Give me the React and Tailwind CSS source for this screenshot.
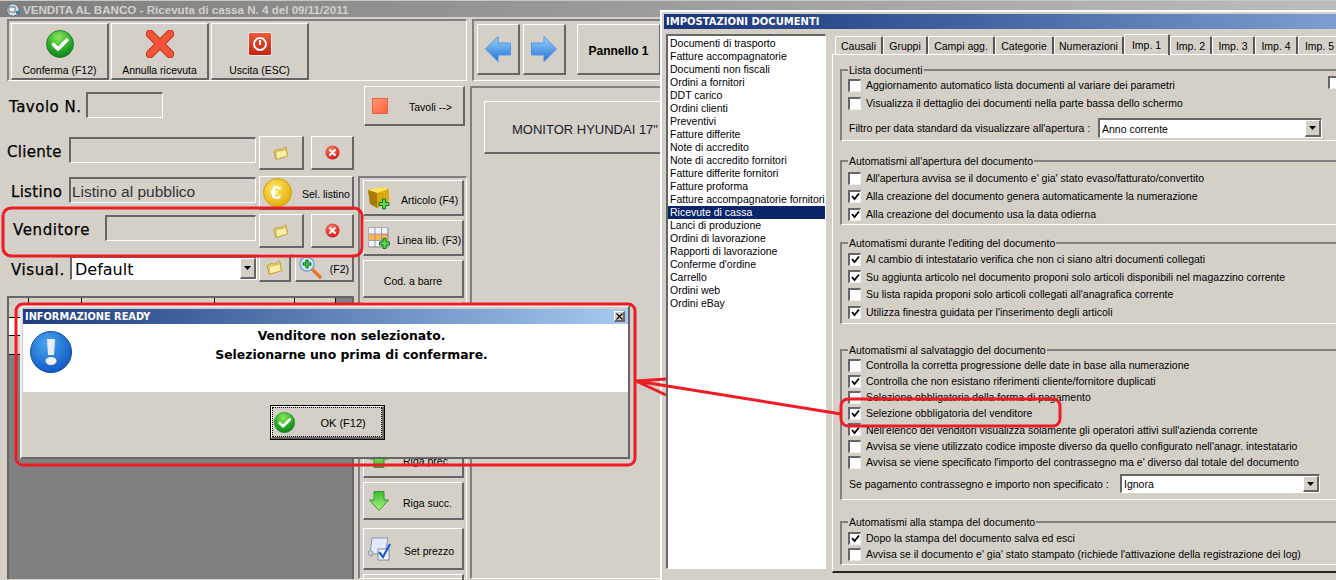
import React from "react"

const raised = "border-t border-l border-r-2 border-b-2 border-t-white border-l-white border-r-[#666] border-b-[#666]"
const sunken = "border-t-2 border-l-2 border-r border-b border-t-[#666] border-l-[#666] border-r-white border-b-white"
const etched = "border-t-2 border-l-2 border-r border-b border-t-[#808080] border-l-[#808080] border-r-white border-b-white"
const formLabel = "font-['DejaVu_Sans'] text-[15px] whitespace-nowrap [-webkit-text-stroke:0.25px_black]"

function GreenCheck({ size = 28, id = "gc" }) {
  return (
    <svg width={size} height={size} viewBox="0 0 28 28">
      <defs>
        <radialGradient id={id} cx="45%" cy="25%" r="80%">
          <stop offset="0%" stopColor="#8ee85a" />
          <stop offset="55%" stopColor="#2fae2a" />
          <stop offset="100%" stopColor="#0a7a18" />
        </radialGradient>
      </defs>
      <circle cx="14" cy="14" r="13.5" fill={`url(#${id})`} stroke="#0d7f1d" strokeWidth="0.8" />
      <path d="M7.5 14.5 L12 19 L21 10" fill="none" stroke="#fff" strokeWidth="3.6" strokeLinecap="round" strokeLinejoin="round" />
    </svg>
  )
}

function RedCross() {
  return (
    <svg width="30" height="28" viewBox="0 0 30 28">
      <path d="M5 4 L25 24 M25 4 L5 24" stroke="#c8321a" strokeWidth="8.5" strokeLinecap="round" />
      <path d="M5 4 L25 24 M25 4 L5 24" stroke="#f4553a" strokeWidth="6.4" strokeLinecap="round" />
    </svg>
  )
}

function PowerIcon() {
  return (
    <svg width="24" height="24" viewBox="0 0 24 24">
      <defs>
        <linearGradient id="pw" x1="0" y1="0" x2="0" y2="1">
          <stop offset="0%" stopColor="#f0583c" />
          <stop offset="100%" stopColor="#c8200c" />
        </linearGradient>
      </defs>
      <rect x="0.5" y="0.5" width="23" height="23" rx="2" fill="url(#pw)" stroke="#f3efe8" />
      <circle cx="12" cy="12" r="6" fill="none" stroke="#fff" strokeWidth="2" />
      <path d="M12 8 V13" stroke="#fff" strokeWidth="2" />
    </svg>
  )
}

function Folder({ size = 16 }) {
  return (
    <svg width={size} height={size} viewBox="0 0 16 16">
      <path d="M1 6 L6 4 L7 5 L13 2 L14.5 11 L3 14.5 Z" fill="#f4dc78" stroke="#b8962e" strokeWidth="0.9" strokeLinejoin="round" />
      <path d="M3 7 L13 4.5 L14.5 11 L3.2 14.2 Z" fill="#fbeea6" stroke="#c4a238" strokeWidth="0.7" strokeLinejoin="round" />
    </svg>
  )
}

function RedCircleX({ id }) {
  return (
    <svg width="15" height="15" viewBox="0 0 15 15">
      <defs>
        <radialGradient id={id} cx="40%" cy="30%" r="80%">
          <stop offset="0%" stopColor="#ff7a66" />
          <stop offset="100%" stopColor="#d01010" />
        </radialGradient>
      </defs>
      <circle cx="7.5" cy="7.5" r="7" fill={`url(#${id})`} />
      <path d="M5 5 L10 10 M10 5 L5 10" stroke="#fff" strokeWidth="2" strokeLinecap="round" />
    </svg>
  )
}

function EuroCoin() {
  return (
    <svg width="29" height="29" viewBox="0 0 29 29" className="shrink-0">
      <defs>
        <radialGradient id="eu" cx="40%" cy="35%" r="75%">
          <stop offset="0%" stopColor="#ffe768" />
          <stop offset="100%" stopColor="#e0a800" />
        </radialGradient>
      </defs>
      <circle cx="14.5" cy="14.5" r="14" fill="url(#eu)" stroke="#d19c00" />
      <text x="13" y="21" textAnchor="middle" fontSize="19" fontWeight="700" fill="#fff" fontFamily="Liberation Sans, sans-serif">€</text>
    </svg>
  )
}

function PlusBadge({ x, y }) {
  return (
    <path
      transform={`translate(${x} ${y})`}
      d="M3.5 0 H6.5 V3.5 H10 V6.5 H6.5 V10 H3.5 V6.5 H0 V3.5 H3.5 Z"
      fill="#5fd94a"
      stroke="#0c7a1a"
      strokeWidth="1"
    />
  )
}

function Cube() {
  return (
    <svg width="24" height="24" viewBox="0 0 24 24">
      <path d="M1 4 L14 1 L22 3 L22 15 L11 22 L3 18 Z" fill="#d8aa10" />
      <path d="M1 4 L10 7 L22 3 L14 1 Z" fill="#ffe55a" />
      <path d="M1 4 L10 7 L10 22 L3 18 Z" fill="#a87c06" />
      <PlusBadge x="12" y="13" />
    </svg>
  )
}

function GridPlus() {
  const cells = []
  for (let r = 0; r < 3; r++) {
    for (let c = 0; c < 3; c++) {
      const fill = r === 1 ? "#f7b55a" : "#f2f2fa"
      cells.push(<rect key={`${r}${c}`} x={1 + c * 6.4} y={1 + r * 6.4} width="5.6" height="5.6" fill={fill} />)
    }
  }
  return (
    <svg width="22" height="22" viewBox="0 0 22 22">
      <rect x="0.5" y="0.5" width="20" height="20" fill="#8a8a9a" />
      {cells}
      <PlusBadge x="11.5" y="11.5" />
    </svg>
  )
}

function Magnifier() {
  return (
    <svg width="23" height="23" viewBox="0 0 23 23">
      <path d="M13 13 L21 21" stroke="#e8792a" strokeWidth="3.5" strokeLinecap="round" />
      <circle cx="8" cy="8" r="7" fill="#cfe8fa" stroke="#6fa4c8" strokeWidth="1.4" />
      <path d="M6.8 4 H9.2 V6.8 H12 V9.2 H9.2 V12 H6.8 V9.2 H4 V6.8 H6.8 Z" fill="#35c23a" stroke="#0c6a1a" strokeWidth="0.8" />
    </svg>
  )
}

function BlueArrow({ flip, id }) {
  return (
    <svg width="26" height="26" viewBox="0 0 26 26" className={flip ? "-scale-x-100" : ""}>
      <defs>
        <linearGradient id={id} x1="0" y1="0" x2="0" y2="1">
          <stop offset="0%" stopColor="#9fd2fa" />
          <stop offset="100%" stopColor="#1f74d8" />
        </linearGradient>
      </defs>
      <path d="M0.5 13 L13 0.5 V7 H25.5 V19 H13 V25.5 Z" fill={`url(#${id})`} stroke="#4b95e6" strokeLinejoin="round" />
    </svg>
  )
}

function GreenArrow({ id, up }) {
  return (
    <svg width="20" height="20" viewBox="0 0 20 20" className={up ? "-scale-y-100" : ""}>
      <defs>
        <linearGradient id={id} x1="0" y1="0" x2="0" y2="1">
          <stop offset="0%" stopColor="#3dbb2c" />
          <stop offset="100%" stopColor="#b0f585" />
        </linearGradient>
      </defs>
      <path d="M5 0.5 H15 V9 H19.5 L10 19.5 L0.5 9 H5 Z" fill={`url(#${id})`} stroke="#2f9a25" strokeLinejoin="round" />
    </svg>
  )
}

function DocCheck() {
  return (
    <svg width="24" height="24" viewBox="0 0 24 24">
      <path d="M5 1 H21 L18 17 H3 Z" fill="#e4eaf8" stroke="#8a94b4" />
      <path d="M1 15 Q3 12 6 15 L5 19 Q2 20 1 15 Z" fill="#c8d0e4" stroke="#8a94b4" />
      <rect x="11" y="12" width="11" height="11" fill="#f8f8fc" stroke="#7a86a8" />
      <path d="M12 15 L16 20 L23 7" fill="none" stroke="#1c5cc8" strokeWidth="2.2" />
    </svg>
  )
}

function AppIcon() {
  return (
    <svg width="15" height="15" viewBox="0 0 15 15">
      <circle cx="7" cy="8" r="6" fill="#d8dce0" stroke="#4a5a6a" strokeDasharray="2 1" />
      <rect x="3" y="5" width="6" height="5" fill="#f4f4f4" stroke="#39566f" strokeWidth="0.8" />
      <rect x="10" y="9" width="4" height="3" fill="#2f7fb8" />
    </svg>
  )
}

function SideButton({ className, icon, label, labelClass }) {
  return (
    <div className={`${raised} ${className} flex shrink-0 items-center`}>
      <span className="ml-[3px] flex w-[24px] shrink-0 justify-center">{icon}</span>
      <span className={`whitespace-nowrap ${labelClass}`}>{label}</span>
    </div>
  )
}

function ToolButton({ icon, label }) {
  return (
    <div className={`${raised} flex h-[57px] w-[98px] flex-col items-center justify-end`}>
      <span className="flex h-[30px] items-center">{icon}</span>
      <span className="mt-[3px] leading-[16px]">{label}</span>
    </div>
  )
}

function FormRow({ className, children }) {
  return <div className={`flex items-center ${className}`}>{children}</div>
}

function SalesWindow() {
  return (
    <div className="w-[700px]">
      <div className="flex h-[17px] w-[1336px] items-center gap-[2px] border-t border-t-[#c8c8c8] bg-gradient-to-r from-[#7f7f7f] to-[#bcbcbc] pl-[6px]">
        <AppIcon />
        <span className="pt-[2px] text-[11.6px] font-bold text-[#d4d0c8]">VENDITA AL BANCO - Ricevuta di cassa N. 4 del 09/11/2011</span>
      </div>

      <div className="mt-[2px] flex pl-[7px]">
        <div className={`${etched} flex h-[62px] w-[460px] gap-[2px] pl-[2px] pt-[2px]`}>
          <ToolButton icon={<GreenCheck id="gc1" />} label="Conferma (F12)" />
          <ToolButton icon={<RedCross />} label="Annulla ricevuta" />
          <ToolButton icon={<PowerIcon />} label="Uscita (ESC)" />
        </div>
        <div className={`${etched} ml-[5px] flex h-[62px] w-[220px] pl-[3px] pt-[3px]`}>
          <div className={`${raised} flex h-[51px] w-[43px] items-center justify-center`}><BlueArrow id="ba1" /></div>
          <div className={`${raised} ml-[3px] flex h-[51px] w-[43px] items-center justify-center`}><BlueArrow id="ba2" flip /></div>
          <div className={`${raised} ml-[11px] flex h-[51px] w-[84px] items-center justify-center pt-[3px] text-[12px] font-bold`}>Pannello 1</div>
        </div>
      </div>

      <div className="mt-[5px] flex">
        <div className="w-[358px] shrink-0">
          <FormRow className="mt-[6px] h-[26px]">
            <span className={`w-[86px] pl-[9px] pt-[5px] tracking-[0.5px] ${formLabel}`}>Tavolo N.</span>
            <span className={`${sunken} h-[26px] w-[77px]`} />
          </FormRow>

          <FormRow className="mt-[18px] h-[34px]">
            <span className={`mb-[1px] w-[69px] pl-[7px] tracking-[0.3px] ${formLabel}`}>Cliente</span>
            <span className={`${sunken} mb-[6px] h-[26px] w-[187px]`} />
            <span className={`${raised} ml-[3px] flex h-[34px] w-[45px] items-center justify-center`}><Folder /></span>
            <span className={`${raised} ml-[7px] flex h-[34px] w-[43px] items-center justify-center`}><RedCircleX id="rc1" /></span>
          </FormRow>

          <FormRow className="mt-[6px] h-[34px]">
            <span className={`mb-[1px] w-[69px] pl-[11px] tracking-[0.3px] ${formLabel}`}>Listino</span>
            <span className={`${sunken} mb-[6px] flex h-[26px] w-[187px] items-center pl-[1px] pt-[2px] text-[15.5px] text-[#333]`}>Listino al pubblico</span>
            <span className={`${raised} ml-[3px] flex h-[34px] w-[95px] items-center pl-[3px]`}>
              <EuroCoin />
              <span className="ml-[10px] mt-[4px] whitespace-nowrap">Sel. listino</span>
            </span>
          </FormRow>

          <FormRow className="mt-[4px] h-[34px]">
            <span className={`mb-[1px] w-[105px] pl-[13px] tracking-[0.6px] ${formLabel}`}>Venditore</span>
            <span className={`${sunken} mb-[6px] h-[26px] w-[151px]`} />
            <span className={`${raised} ml-[3px] flex h-[34px] w-[45px] items-center justify-center`}><Folder /></span>
            <span className={`${raised} ml-[7px] flex h-[34px] w-[43px] items-center justify-center`}><RedCircleX id="rc2" /></span>
          </FormRow>

          <FormRow className="mt-[6px] h-[28px]">
            <span className={`mt-[5px] w-[70px] pl-[11px] tracking-[0.6px] ${formLabel}`}>Visual.</span>
            <span className={`${sunken} flex h-[24px] w-[187px] items-center justify-between bg-white pl-[3px] font-['DejaVu_Sans'] text-[16px]`}>
              <span className="pt-[2px]">Default</span>
              <ComboArrow />
            </span>
            <span className={`${raised} ml-[2px] flex h-[28px] w-[32px] items-center justify-center`}><Folder size={17} /></span>
            <span className={`${raised} ml-[4px] flex h-[28px] w-[59px] items-center justify-between px-[3px]`}>
              <Magnifier />
              <span className="mt-[5px]">(F2)</span>
            </span>
          </FormRow>

          <div className="ml-[7px] mt-[14px] h-[283px] w-[347px] border-t-2 border-l-2 border-r-2 border-[#666] bg-[#808080]">
            <div className="flex h-[19px] bg-[#d4d0c8]">
              <span className="w-[20px] border-r border-black" />
              <span className="w-[53px] border-r border-black" />
              <span className="w-[133px] border-r border-black" />
              <span className="w-[80px] border-r border-black" />
              <span className="w-[41px] border-r border-black" />
              <span className="flex-1 bg-[#808080]" />
            </div>
            <div className="h-[19px] w-[20px] border-y border-black bg-white" />
            <div className="h-[19px] w-[20px] border-b border-black bg-[#d4d0c8]" />
          </div>
        </div>

        <div className="w-[112px] shrink-0">
          <SideButton
            className="ml-[6px] h-[40px] w-[101px]"
            icon={<span className="h-[16px] w-[16px] border border-[#e8623f] bg-gradient-to-br from-[#ff9a7a] to-[#ff5c38]" />}
            label="Tavoli -->"
            labelClass="ml-[17px] mt-[5px]"
          />
          <div className={`${etched} mt-[50px] h-[403px] w-[109px] pl-[3px] pt-[2px]`}>
            <div className="flex w-[101px] flex-col gap-[4px]">
              <SideButton className="h-[36px]" icon={<Cube />} label="Articolo (F4)" labelClass="ml-[10px] mt-[7px]" />
              <SideButton className="h-[36px]" icon={<GridPlus />} label="Linea lib. (F3)" labelClass="ml-[6px] mt-[7px]" />
              <div className={`${raised} flex h-[38px] shrink-0 items-center justify-center pt-[7px]`}>Cod. a barre</div>
              <div className={`${raised} h-[133px] shrink-0`} />
              <SideButton className="h-[39px]" icon={<GreenArrow id="ga1" up />} label="Riga prec." labelClass="ml-[12px] mt-[7px]" />
              <SideButton className="h-[38px]" icon={<GreenArrow id="ga2" />} label="Riga succ." labelClass="ml-[12px] mt-[7px]" />
              <SideButton className="mt-[4px] h-[42px]" icon={<DocCheck />} label="Set prezzo" labelClass="ml-[13px] mt-[7px]" />
              <div className={`${raised} h-[20px] shrink-0`} />
            </div>
          </div>
        </div>

        <div className={`${etched} h-[493px] w-[220px] pl-[12px] pt-[13px]`}>
          <div className={`${raised} flex h-[53px] w-[190px] items-center whitespace-nowrap pl-[27px] pt-[5px] text-[13px] text-[#1a1a2e]`}>MONITOR HYUNDAI 17"</div>
        </div>
      </div>
    </div>
  )
}

function ComboArrow() {
  return (
    <span className={`${raised} flex h-full w-[16px] shrink-0 items-center justify-center bg-[#d4d0c8]`}>
      <svg width="7" height="4" viewBox="0 0 7 4"><path d="M0 0 H7 L3.5 4 Z" fill="#000" /></svg>
    </span>
  )
}

function InfoDialog() {
  return (
    <div className="absolute left-[20px] top-[305px] h-[154px] w-[610px] border-2 border-t-[#eee] border-l-[#eee] border-r-[#666] border-b-[#666] bg-[#d4d0c8] pl-[1px] pt-[2px]">
      <div className="flex h-[15px] items-center justify-between bg-gradient-to-r from-[#1f3c80] to-[#a6caf0] pl-[2px] pr-[3px]">
        <span className="font-['DejaVu_Sans'] text-[9.8px] font-bold leading-none text-white">INFORMAZIONE READY</span>
        <span className={`${raised} flex h-[11px] w-[11px] items-center justify-center bg-[#d4d0c8]`}>
          <svg width="7" height="7" viewBox="0 0 7 7"><path d="M0.5 0.5 L6.5 6.5 M6.5 0.5 L0.5 6.5" stroke="#000" strokeWidth="1.2" /></svg>
        </span>
      </div>
      <div className="flex h-[68px] bg-white">
        <div className="ml-[7px] mt-[7px] shrink-0">
          <svg width="42" height="42" viewBox="0 0 42 42">
            <defs>
              <radialGradient id="ex" cx="40%" cy="30%" r="80%">
                <stop offset="0%" stopColor="#4aa8f0" />
                <stop offset="100%" stopColor="#0a4fc0" />
              </radialGradient>
            </defs>
            <circle cx="21" cy="21" r="20.5" fill="url(#ex)" stroke="#0a4aa8" />
            <path d="M17 8 H25 L24 24 H18 Z" fill="#e8eef6" />
            <ellipse cx="21" cy="30" rx="5.5" ry="4" fill="#f2f6fb" />
          </svg>
        </div>
        <div className="flex-1 pl-[3px] pt-[2px] text-center font-['DejaVu_Sans'] text-[12.4px] font-bold leading-[19px] text-black">
          <p>Venditore non selezionato.</p>
          <p>Selezionarne uno prima di confermare.</p>
        </div>
      </div>
      <div className="flex justify-center pt-[13px]">
        <div className="ml-[3px] h-[35px] w-[115px] border border-black">
          <div className={`${raised} h-full`}>
            <div className="flex h-full items-center border border-dotted border-black pl-[1px]">
              <GreenCheck size={21} id="gc2" />
              <span className="ml-[26px] mt-[3px] text-[11px]">OK (F12)</span>
            </div>
          </div>
        </div>
      </div>
    </div>
  )
}

const docTypes = [
  "Documenti di trasporto",
  "Fatture accompagnatorie",
  "Documenti non fiscali",
  "Ordini a fornitori",
  "DDT carico",
  "Ordini clienti",
  "Preventivi",
  "Fatture differite",
  "Note di accredito",
  "Note di accredito fornitori",
  "Fatture differite fornitori",
  "Fatture proforma",
  "Fatture accompagnatorie fornitori",
  "Ricevute di cassa",
  "Lanci di produzione",
  "Ordini di lavorazione",
  "Rapporti di lavorazione",
  "Conferme d'ordine",
  "Carrello",
  "Ordini web",
  "Ordini eBay",
]

const tabs = [
  { label: "Causali", width: "w-[48px]" },
  { label: "Gruppi", width: "w-[45px]" },
  { label: "Campi agg.", width: "w-[67px]" },
  { label: "Categorie", width: "w-[59px]" },
  { label: "Numerazioni", width: "w-[70px]" },
  { label: "Imp. 1", width: "w-[46px]", active: true },
  { label: "Imp. 2", width: "w-[42px]" },
  { label: "Imp. 3", width: "w-[43px]" },
  { label: "Imp. 4", width: "w-[43px]" },
  { label: "Imp. 5", width: "w-[44px]" },
]

function Checkbox({ checked }) {
  return (
    <span className="flex h-[13px] w-[13px] shrink-0 items-center justify-center border-t-2 border-l-2 border-r border-b border-t-[#666] border-l-[#666] border-r-[#eee] border-b-[#eee] bg-white">
      {checked && (
        <svg width="9" height="9" viewBox="0 0 9 9"><path d="M1 4 L3.5 7 L8 1.5" fill="none" stroke="#000" strokeWidth="1.8" /></svg>
      )}
    </span>
  )
}

function CheckRow({ label, checked, className = "h-[18px]" }) {
  return (
    <div className={`flex items-center gap-[5px] ${className}`}>
      <Checkbox checked={checked} />
      <span className="whitespace-nowrap pt-[2px]">{label}</span>
    </div>
  )
}

function ComboRow({ label, labelClass, comboClass, value }) {
  return (
    <div className="flex items-center">
      <span className={`whitespace-nowrap pl-[1px] pt-[2px] ${labelClass}`}>{label}</span>
      <span className={`${sunken} flex items-center justify-between bg-white pl-[2px] ${comboClass}`}>
        <span className="pt-[2px]">{value}</span>
        <ComboArrow />
      </span>
    </div>
  )
}

function Group({ title, className, children }) {
  return (
    <div className={`w-[500px] pl-[6px] ${etched} ${className}`}>
      <div className="-mt-[8px] h-[13px] w-fit bg-[#d4d0c8] px-[1px] leading-[14px]">{title}</div>
      {children}
    </div>
  )
}

function SettingsWindow() {
  return (
    <div className="absolute left-[660px] top-[10px] h-[570px] w-[676px] border-l-2 border-t-2 border-l-white border-t-white bg-[#d4d0c8] pl-[2px] pt-[2px]">
      <div className="flex h-[15px] w-[680px] items-center bg-gradient-to-r from-[#173379] to-[#7f9fd0] pl-[2px]">
        <span className="font-['DejaVu_Sans'] text-[10px] font-bold leading-none text-white">IMPOSTAZIONI DOCUMENTI</span>
      </div>
      <div className="mt-[5px] flex">
        <div className={`${sunken} ml-[2px] h-[535px] w-[160px] shrink-0 overflow-hidden bg-white pt-[1px]`}>
          {docTypes.map((name) => (
            <div
              key={name}
              className={`h-[13px] whitespace-nowrap pl-[2px] leading-[13px] ${name === "Ricevute di cassa" ? "bg-[#0a246a] text-white" : ""}`}
            >
              {name}
            </div>
          ))}
        </div>

        <div className="ml-[6px] w-[520px] shrink-0">
          <div className="flex h-[20px] items-end pl-[3px]">
            {tabs.map((tab) => (
              <span
                key={tab.label}
                className={`flex shrink-0 items-center justify-center rounded-t-[2px] border-t border-l border-r-2 border-t-white border-l-white border-r-[#555] ${tab.width} ${
                  tab.active ? "relative z-10 -mb-px h-[21px] pt-[1px]" : "h-[18px] pt-[3px]"
                }`}
              >
                {tab.label}
              </span>
            ))}
          </div>
          <div className="h-[519px] border-t border-l border-b-2 border-t-white border-l-white border-b-[#222] pl-[7px] pt-[14px]">
            <Group title="Lista documenti" className="h-[72px]">
              <div className="flex items-start">
                <CheckRow label="Aggiornamento automatico lista documenti al variare dei parametri" />
                <span className="-mr-[2px] ml-auto"><Checkbox /></span>
              </div>
              <CheckRow label="Visualizza il dettaglio dei documenti nella parte bassa dello schermo" />
              <div className="mt-[6px]">
                <ComboRow
                  label="Filtro per data standard da visualizzare all'apertura :"
                  labelClass="w-[250px]"
                  comboClass="h-[20px] w-[224px]"
                  value="Anno corrente"
                />
              </div>
            </Group>

            <Group title="Automatismi all'apertura del documento" className="mt-[19px] h-[65px]">
              <div className="pt-[2px]">
                <CheckRow label="All'apertura avvisa se il documento e' gia' stato evaso/fatturato/convertito" />
                <CheckRow checked label="Alla creazione del documento genera automaticamente la numerazione" />
                <CheckRow checked label="Alla creazione del documento usa la data odierna" />
              </div>
            </Group>

            <Group title="Automatismi durante l'editing del documento" className="mt-[17px] h-[82px]">
              <div className="pt-[1px]">
                <CheckRow checked label="Al cambio di intestatario verifica che non ci siano altri documenti collegati" />
                <CheckRow checked className="h-[17px]" label="Su aggiunta articolo nel documento proponi solo articoli disponibili nel magazzino corrente" />
                <CheckRow label="Su lista rapida proponi solo articoli collegati all'anagrafica corrente" />
                <CheckRow checked label="Utilizza finestra guidata per l'inserimento degli articoli" />
              </div>
            </Group>

            <Group title="Automatismi al salvataggio del documento" className="mt-[25px] h-[151px]">
              <div className="pt-[1px]">
                <CheckRow className="h-[16px]" label="Controlla la corretta progressione delle date in base alla numerazione" />
                <CheckRow checked className="h-[16px]" label="Controlla che non esistano riferimenti cliente/fornitore duplicati" />
                <CheckRow className="h-[16px]" label="Selezione obbligatoria della forma di pagamento" />
                <CheckRow checked className="h-[16px]" label="Selezione obbligatoria del venditore" />
                <CheckRow checked className="h-[17px]" label="Nell'elenco dei venditori visualizza solamente gli operatori attivi sull'azienda corrente" />
                <CheckRow className="h-[16px]" label="Avvisa se viene utilizzato codice imposte diverso da quello configurato nell'anagr. intestatario" />
                <CheckRow className="h-[16px]" label="Avvisa se viene specificato l'importo del contrassegno ma e' diverso dal totale del documento" />
                <div className="mt-[4px]">
                  <ComboRow
                    label="Se pagamento contrassegno e importo non specificato :"
                    labelClass="w-[272px]"
                    comboClass="h-[19px] w-[200px]"
                    value="Ignora"
                  />
                </div>
              </div>
            </Group>

            <Group title="Automatismi alla stampa del documento" className="mt-[21px] h-[44px]">
              <div className="pt-[2px]">
                <CheckRow checked className="h-[16px]" label="Dopo la stampa del documento salva ed esci" />
                <CheckRow className="h-[16px]" label="Avvisa se il documento e' gia' stato stampato (richiede l'attivazione della registrazione dei log)" />
              </div>
            </Group>
          </div>
        </div>
      </div>
    </div>
  )
}

function RedMarks() {
  return (
    <svg className="pointer-events-none absolute left-0 top-0" width="1336" height="580" fill="none" stroke="#ee1c25" strokeWidth="3">
      <rect x="3" y="208" width="359" height="48" rx="8" />
      <rect x="16" y="304" width="619" height="161" rx="7" />
      <rect x="841" y="399" width="219" height="27" rx="7" />
      <path d="M841 414 L636 381 M636 381 L666 379 M636 381 L666 395" />
    </svg>
  )
}

export default function App() {
  return (
    <div className="relative h-[580px] w-[1336px] overflow-hidden bg-[#d4d0c8] font-['Liberation_Sans',sans-serif] text-[10.5px] text-black">
      <SalesWindow />
      <InfoDialog />
      <SettingsWindow />
      <RedMarks />
    </div>
  )
}
